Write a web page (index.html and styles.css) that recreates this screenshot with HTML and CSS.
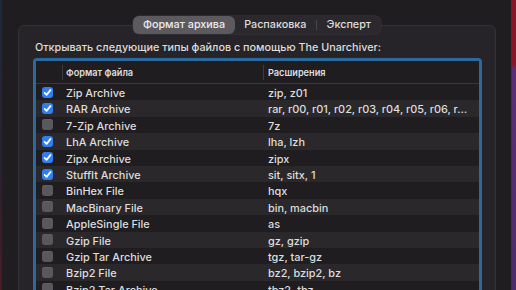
FILE: index.html
```html
<!DOCTYPE html>
<html lang="ru">
<head>
    <meta charset="UTF-8">
    <title>The Unarchiver — Настройки</title>
    <link rel="stylesheet" href="styles.css">
</head>
<body>
    <div class="screen">
        <div class="desk desk-left"></div>
        <div class="window">
            <div class="tabs">
                <span class="tab active">Формат архива</span>
                <span class="tab">Распаковка</span>
                <span class="tab-sep"></span>
                <span class="tab">Эксперт</span>
            </div>
            <div class="panel">
                <p class="intro">Открывать следующие типы файлов с помощью The Unarchiver:</p>
                <div class="table">
                    <div class="row head">
                        <div class="cell check"></div>
                        <div class="cell name">Формат файла</div>
                        <div class="cell ext">Расширения</div>
                    </div>
                    <div class="row">
                        <div class="cell check"><span class="box on"></span></div>
                        <div class="cell name">Zip Archive</div>
                        <div class="cell ext">zip, z01</div>
                    </div>
                    <div class="row">
                        <div class="cell check"><span class="box on"></span></div>
                        <div class="cell name">RAR Archive</div>
                        <div class="cell ext">rar, r00, r01, r02, r03, r04, r05, r06, r…</div>
                    </div>
                    <div class="row">
                        <div class="cell check"><span class="box"></span></div>
                        <div class="cell name">7-Zip Archive</div>
                        <div class="cell ext">7z</div>
                    </div>
                    <div class="row">
                        <div class="cell check"><span class="box on"></span></div>
                        <div class="cell name">LhA Archive</div>
                        <div class="cell ext">lha, lzh</div>
                    </div>
                    <div class="row">
                        <div class="cell check"><span class="box on"></span></div>
                        <div class="cell name">Zipx Archive</div>
                        <div class="cell ext">zipx</div>
                    </div>
                    <div class="row">
                        <div class="cell check"><span class="box on"></span></div>
                        <div class="cell name">StuffIt Archive</div>
                        <div class="cell ext">sit, sitx, 1</div>
                    </div>
                    <div class="row">
                        <div class="cell check"><span class="box"></span></div>
                        <div class="cell name">BinHex File</div>
                        <div class="cell ext">hqx</div>
                    </div>
                    <div class="row">
                        <div class="cell check"><span class="box"></span></div>
                        <div class="cell name">MacBinary File</div>
                        <div class="cell ext">bin, macbin</div>
                    </div>
                    <div class="row">
                        <div class="cell check"><span class="box"></span></div>
                        <div class="cell name">AppleSingle File</div>
                        <div class="cell ext">as</div>
                    </div>
                    <div class="row">
                        <div class="cell check"><span class="box"></span></div>
                        <div class="cell name">Gzip File</div>
                        <div class="cell ext">gz, gzip</div>
                    </div>
                    <div class="row">
                        <div class="cell check"><span class="box"></span></div>
                        <div class="cell name">Gzip Tar Archive</div>
                        <div class="cell ext">tgz, tar-gz</div>
                    </div>
                    <div class="row">
                        <div class="cell check"><span class="box"></span></div>
                        <div class="cell name">Bzip2 File</div>
                        <div class="cell ext">bz2, bzip2, bz</div>
                    </div>
                    <div class="row">
                        <div class="cell check"><span class="box"></span></div>
                        <div class="cell name">Bzip2 Tar Archive</div>
                        <div class="cell ext">tbz2, tbz</div>
                    </div>
                </div>
            </div>
        </div>
        <div class="desk desk-right"></div>
    </div>
</body>
</html>
```

FILE: styles.css
```css
body {
    margin: 0;
    background: #1f1d20;
    font-family: Inter, "Liberation Sans", sans-serif;
    color: #dedede;
    overflow: hidden;
}
.screen {
    display: flex;
    height: 290px;
}
.desk-left {
    width: 2px;
    background: linear-gradient(#1c2a3c, #2a2030 60%, #4a1a22);
}
.desk-right {
    width: 4px;
    background: linear-gradient(#8c1426 0, #8c1426 22%, #5c2c78 24%, #4e2a6e);
}
.window {
    flex: 1;
    background: #1f1d20;
    border-right: 1px solid #3a383c;
    padding: 16px 15px 0 16px;
}
.tabs {
    position: relative;
    z-index: 1;
    display: flex;
    align-items: center;
    width: max-content;
    margin: 0 auto;
    height: 18px;
    background: #2b292d;
    border-radius: 6px;
    box-shadow: 0 0 0 0.5px #3a383c;
    font-size: 10.8px;
    font-weight: 500;
}
.tab {
    padding: 0 9.5px;
    height: 18px;
    line-height: 18px;
    border-radius: 6px;
}
.tab.active {
    background: #5c5a5e;
    color: #ececec;
}
.tab-sep {
    width: 1px;
    height: 10px;
    background: #48464a;
}
.panel {
    margin-top: -9px;
    background: #262428;
    border: 1px solid #343236;
    border-radius: 6px;
    padding: 14px 13px 0 14px;
    height: 260px;
}
.intro {
    margin: 0 0 2px 2px;
    font-size: 10.8px;
    font-weight: 500;
    line-height: 16px;
}
.table {
    border: 3px solid #2b6a9c;
    border-bottom: none;
    border-radius: 4px 4px 0 0;
    background: #1f1d20;
}
.row {
    display: grid;
    grid-template-columns: 26px 201px 1fr;
    height: 16.4px;
    align-items: center;
    font-size: 10.9px;
    font-weight: 500;
}
.row:nth-child(odd) {
    background: #2a282b;
}
.row.head {
    height: 22px;
    border-bottom: 1px solid #3a383c;
    background: #1f1d20;
    font-size: 9.2px;
    font-weight: 600;
}
.cell {
    box-sizing: border-box;
    height: 16.4px;
    padding-top: 2px;
    line-height: 14.4px;
    white-space: nowrap;
    overflow: hidden;
    text-overflow: ellipsis;
}
.cell.name {
    padding-left: 4px;
}
.cell.ext {
    padding-left: 5px;
    padding-right: 8px;
}
.head .cell {
    position: relative;
    height: 15px;
    line-height: 15px;
    padding-top: 0;
}
.head .name::before,
.head .ext::before {
    content: "";
    position: absolute;
    left: 0;
    top: 0;
    height: 15px;
    border-left: 1px solid #3c3a3e;
}
.check {
    display: flex;
    align-items: center;
    padding-left: 6px;
}
.row .check {
    padding-top: 0;
}
.box {
    width: 11px;
    height: 11px;
    border-radius: 3px;
    background: #5a585c;
    box-shadow: inset 0 0.5px 0 #6a686c;
}
.box.on {
    background: #2f7ff0 url("data:image/svg+xml,%3Csvg xmlns='http://www.w3.org/2000/svg' viewBox='0 0 11 11'%3E%3Cpath d='M2.6 5.8 L4.6 7.9 L8.6 2.9' fill='none' stroke='white' stroke-width='1.7' stroke-linecap='round' stroke-linejoin='round'/%3E%3C/svg%3E") center / 11px 11px no-repeat;
    box-shadow: none;
}
```
